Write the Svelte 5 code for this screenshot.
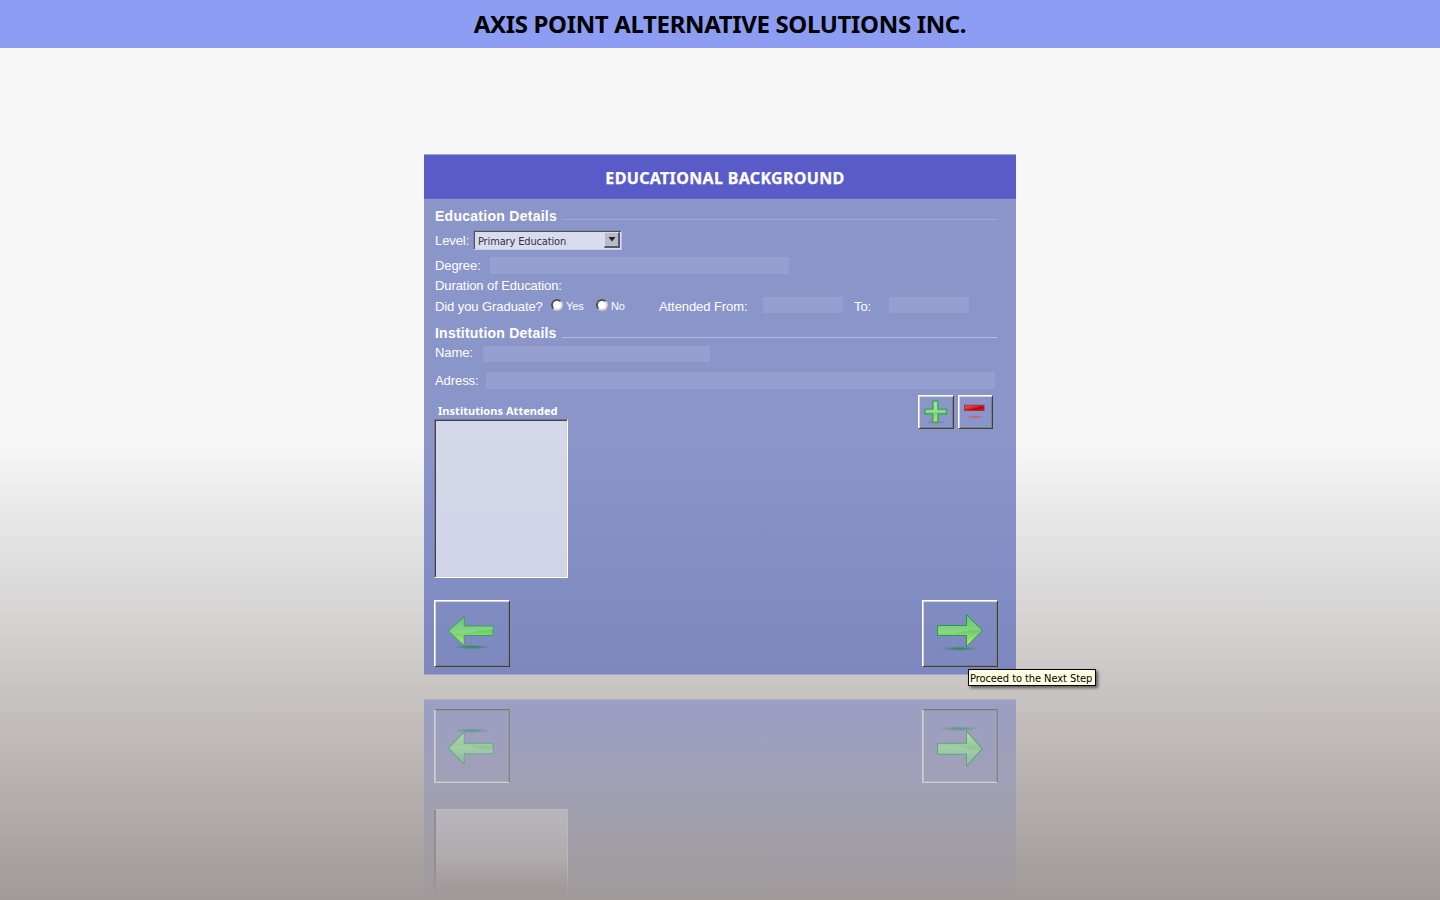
<script>
  const uid = { left: 'l', right: 'r', leftMirror: 'lm', rightMirror: 'rm' };
</script>

{#snippet arrow(dir, id)}
  <svg class="arrow" width="50" height="46" viewBox="0 0 50 46">
    <defs>
      <linearGradient id={'g' + id} x1="0" y1="0" x2="0" y2="1">
        <stop offset="0" stop-color="#59b96c" />
        <stop offset="0.5" stop-color="#6ccb6c" />
        <stop offset="1" stop-color="#b4ef70" />
      </linearGradient>
      <linearGradient id={'h' + id} x1="0" y1="0" x2="0" y2="1">
        <stop offset="0" stop-color="#c5f0b5" stop-opacity="0.15" />
        <stop offset="1" stop-color="#c5f0b5" stop-opacity="0.3" />
      </linearGradient>
      <radialGradient id={'s' + id}>
        <stop offset="0" stop-color="#2b8a52" />
        <stop offset="0.45" stop-color="#3f8a6c" stop-opacity="0.75" />
        <stop offset="1" stop-color="#5c86a0" stop-opacity="0" />
      </radialGradient>
    </defs>
    {#if dir === 'left'}
      <ellipse cx="25" cy="37" rx="21" ry="2.4" fill={'url(#s' + id + ')'} />
      <path d="M1 21 17.2 6.5V16H46V25.5H17.2V35.5Z" fill={'url(#g' + id + ')'} stroke="#389f67" stroke-linejoin="round" />
      <path d="M3 20.5 17 8V16.5H46V20C31 19 20 25 6 23Z" fill={'url(#h' + id + ')'} />
    {:else}
      <ellipse cx="24" cy="38.7" rx="21" ry="2.4" fill={'url(#s' + id + ')'} />
      <path d="M2.5 15.5H31.5V4.5L47.5 20.5 31.5 36.5V25.5H2.5Z" fill={'url(#g' + id + ')'} stroke="#2c9758" stroke-linejoin="round" />
      <path d="M3 16H32V6L46 20C34 18 25 25 3 23Z" fill={'url(#h' + id + ')'} />
    {/if}
  </svg>
{/snippet}

<div class="page">
  <header><h1>AXIS POINT ALTERNATIVE SOLUTIONS INC.</h1></header>

  <main class="panel">
    <div class="title"><h2>EDUCATIONAL BACKGROUND</h2></div>
    <div class="body">
      <div class="row heading first"><span class="sec">Education Details</span><i class="rule faint"></i></div>
      <div class="row level">
        <span class="lbl w-level">Level:</span>
        <div class="select">
          <span class="value">Primary Education</span>
          <span class="drop"><svg width="8" height="5" viewBox="0 0 8 5"><path d="M0.5 0H7.5L4 4.5Z" fill="#202030" /></svg></span>
        </div>
      </div>
      <div class="row degree"><span class="lbl w-degree">Degree:</span><div class="field"></div></div>
      <div class="row duration"><span class="lbl w-duration">Duration of Education:</span></div>
      <div class="row grad">
        <span class="lbl w-grad">Did you Graduate?</span>
        <span class="radio"></span><span class="opt yes">Yes</span>
        <span class="radio"></span><span class="opt no">No</span>
        <span class="lbl w-from">Attended From:</span><div class="field date"></div>
        <span class="lbl w-to">To:</span><div class="field date"></div>
      </div>
      <div class="row heading second"><span class="sec tight">Institution Details</span><i class="rule"></i></div>
      <div class="row name"><span class="lbl w-name">Name:</span><div class="field"></div></div>
      <div class="row address"><span class="lbl w-address">Adress:</span><div class="field"></div></div>
      <div class="lists">
        <div class="attended">
          <span class="cap">Institutions Attended</span>
          <div class="listbox"></div>
        </div>
        <div class="tools">
          <button class="bevel plus" aria-label="Add">
            <svg width="26" height="26" viewBox="0 0 26 26">
              <defs>
                <linearGradient id="pg" x1="0" y1="0" x2="0" y2="1"><stop offset="0" stop-color="#8bd896" /><stop offset=".5" stop-color="#78cf79" /><stop offset="1" stop-color="#a4ed68" /></linearGradient>
              </defs>
              <ellipse cx="12.5" cy="23" rx="9" ry="1.7" fill="#3e806f" opacity=".25" />
              <path d="M9.8 2H15V10.1H23.5V15H15V23.2H9.8V15H1.8V10.1H9.8Z" fill="url(#pg)" stroke="#41a45d" stroke-width="1.4" stroke-linejoin="round" />
              <path d="M11 3H13.8V12H22.5V13H2.8V11.3H11Z" fill="#c9f5c2" opacity=".4" />
            </svg>
          </button>
          <button class="bevel minus" aria-label="Remove">
            <svg width="26" height="26" viewBox="0 0 26 26">
              <defs>
                <linearGradient id="mg" x1="0" y1="0" x2="1" y2="1"><stop offset="0" stop-color="#e36a70" /><stop offset=".5" stop-color="#d01f20" /><stop offset=".6" stop-color="#b90505" /><stop offset="1" stop-color="#d81a10" /></linearGradient>
                <radialGradient id="ms"><stop offset="0" stop-color="#cb6070" /><stop offset=".5" stop-color="#c2687a" stop-opacity=".8" /><stop offset="1" stop-color="#b0709a" stop-opacity="0" /></radialGradient>
              </defs>
              <rect x="1.5" y="6.3" width="19.5" height="5.2" fill="url(#mg)" stroke="#b5283a" />
              <ellipse cx="12" cy="18" rx="9" ry="1.8" fill="url(#ms)" />
            </svg>
          </button>
        </div>
      </div>
      <div class="nav">
        <button class="bevel big" aria-label="Back">{@render arrow('left', uid.left)}</button>
        <button class="bevel big" aria-label="Next">{@render arrow('right', uid.right)}</button>
      </div>
    </div>
    <div class="tip">Proceed to the Next Step</div>
  </main>

  <div class="mirror" aria-hidden="true">
    <div class="nav">
      <div class="ghost">{@render arrow('left', uid.leftMirror)}</div>
      <div class="ghost">{@render arrow('right', uid.rightMirror)}</div>
    </div>
    <div class="ghost-list"></div>
  </div>
</div>

<style>
  :global(body) { margin: 0; overflow: hidden; }
  .page {
    width: 1440px; height: 900px; overflow: hidden; display: flex; flex-direction: column; align-items: center;
    background: linear-gradient(#f7f7f7 0 440px, #dad9d9 590px, #c8c4c2 690px, #a09a99 900px);
    font-family: "Liberation Sans", Arial, sans-serif; color: #fff;
  }
  header { width: 100%; height: 48px; flex: none; background: #8c9df3; display: flex; justify-content: center; align-items: center; }
  h1 { margin: 0; font: 700 24px/48px "Noto Sans", sans-serif; color: #000; white-space: nowrap; letter-spacing: -0.35px; }
  .panel { position: relative; flex: none; width: 592px; height: 521px; margin-top: 106px; background: linear-gradient(#8a95ca 0 286px, #7c88be 519px); box-shadow: inset 0 -1px #a3a8c8; }
  .title { height: 45px; box-sizing: border-box; border-top: 1px solid #a4a2dc; border-bottom: 1px solid #6263cd; background: #585bc8; display: flex; justify-content: center; padding-left: 10px; }
  h2 { margin: 0; font: 700 16px/47px "Noto Sans", sans-serif; white-space: nowrap; letter-spacing: 0.34px; -webkit-text-stroke: .25px #fff; }
  .body { padding: 0 18px 0 10px; }
  .row { display: flex; align-items: center; padding-left: 1px; white-space: nowrap; }
  .lbl { font-size: 13px; line-height: 17px; flex: none; letter-spacing: -.08px; }
  .sec { font-size: 14px; font-weight: 700; line-height: 18px; width: 127px; flex: none; letter-spacing: .27px; }
  .sec.tight { letter-spacing: .22px; }
  .heading { height: 18px; }
  .rule { flex: 1; height: 1px; margin-top: 9px; margin-right: 1px; background: #b3b9e2; }
  .rule.faint { background: #9da7d8; margin-top: 7px; }
  .first { margin-top: 8px; }
  .level { margin-top: 5px; height: 20px; }
  .w-level { width: 38px; }
  .select { width: 149px; height: 20px; box-sizing: border-box; display: flex; justify-content: space-between; background: #d9dcee; border: 1px solid; border-color: #8589a0 #b9bfe0 #c6cae6 #8589a0; box-shadow: inset 1px 1px #4d5064; padding: 1px 1px 1px 4px; }
  .value { font: 11px/19px "DejaVu Sans Condensed", "DejaVu Sans", sans-serif; font-stretch: condensed; letter-spacing: -.15px; color: #303242; }
  .drop { width: 16px; height: 16px; box-sizing: border-box; background: #b9bbc7; border: 1px solid #dadce8; border-right: 2px solid #555969; border-bottom: 2px solid #555969; display: grid; place-items: center; }
  .degree { margin-top: 7px; height: 17px; }
  .field { background: #96a0d0; height: 17px; }
  .w-degree { width: 55px; }
  .degree .field { width: 299px; }
  .duration { margin-top: 3px; height: 17px; }
  .grad { margin-top: 3px; height: 17px; }
  .grad .lbl { position: relative; top: 1px; }
  .w-grad { width: 116px; }
  .radio { width: 8px; height: 8px; border: 2px solid; border-color: #50524f #d5d0c8 #d5d0c8 #50524f; border-radius: 50%; background: #fff; flex: none; margin-bottom: 1px; }
  .opt { font: 11px/17px "Liberation Sans", sans-serif; padding-left: 3px; position: relative; top: 1px; letter-spacing: -.1px; }
  .yes { width: 30px; }
  .no { width: 48px; }
  .w-from { width: 104px; }
  .date { width: 80px; height: 16px; margin-bottom: 1px; }
  .w-to { width: 35px; margin-left: 11px; }
  .second { margin-top: 10px; }
  .name { margin-top: 3px; height: 17px; }
  .name .lbl { position: relative; top: -1px; }
  .w-name { width: 48px; }
  .name .field { width: 227px; height: 16px; margin-top: 1px; }
  .address { margin-top: 10px; height: 17px; }
  .w-address { width: 51px; }
  .address .field { width: 509px; }
  .lists { display: flex; justify-content: space-between; margin-top: 5px; height: 184px; }
  .attended { padding-top: 8px; }
  .cap { display: block; padding-left: 4px; height: 17px; font: 700 11px/18px "Noto Sans", sans-serif; letter-spacing: .04px; white-space: nowrap; }
  .listbox { width: 134px; height: 159px; box-sizing: border-box; border: 1px solid; border-color: #77798a #fff #fff #77798a; box-shadow: inset 1px 1px #404252, inset -1px -1px #d5d2ca; background: linear-gradient(#d5d8ea, #cfd4e8); }
  .tools { display: flex; gap: 4px; margin-right: 5px; }
  .bevel { appearance: none; padding: 0; box-sizing: border-box; background: transparent; border: 1px solid; border-color: #fff #404040 #404040 #fff; box-shadow: inset 1px 1px #d8d5cd, inset -1px -1px #808080; display: grid; place-items: center; }
  .tools .bevel { height: 34px; margin-top: 1px; }
  .plus { width: 36px; }
  .minus { width: 35px; }
  .nav { display: flex; justify-content: space-between; }
  .body .nav { margin-top: 22px; }
  .big { width: 76px; height: 67px; place-items: start center; padding-top: 9px; }
  .arrow { display: block; }
  .tip { position: absolute; left: 544px; top: 515px; width: 128px; height: 17px; box-sizing: border-box; border: 1px solid #000; background: #ffffe1; color: #000; box-shadow: 2px 2px 3px rgba(0,0,0,.55); font: 11px/17px "DejaVu Sans Condensed", "DejaVu Sans", sans-serif; font-stretch: condensed; letter-spacing: -.07px; white-space: nowrap; padding-left: 1px; }
  .mirror { flex: none; width: 592px; height: 201px; margin-top: 24px; box-sizing: border-box; padding: 9px 18px 0 10px; border-top: 1px solid #acaebd; background: linear-gradient(#9b9fc3, #a1a1b5 90px, #a09da6 145px, #a09a99 200px); }
  .ghost { width: 76px; height: 74px; box-sizing: border-box; border: 1px solid; border-color: #77777b #85858a #d0cdce #d0cdce; box-shadow: inset 1px 0 #c2c0c4, inset -1px 1px #96969e, inset 0 -1px #b6b4b8; display: grid; place-items: center; }
  .ghost .arrow { transform: scaleY(-1.1); opacity: .65; filter: brightness(1.1) saturate(.75); }
  .ghost-list { width: 134px; height: 91px; margin-top: 26px; box-sizing: border-box; border: 1px solid #bcb7bc; border-left: 2px solid #918d92; border-bottom: 0; background: linear-gradient(#b8b6bd, #b0abad 50%, #a09a99); -webkit-mask: linear-gradient(#000 60%, transparent); mask: linear-gradient(#000 60%, transparent); }
</style>
